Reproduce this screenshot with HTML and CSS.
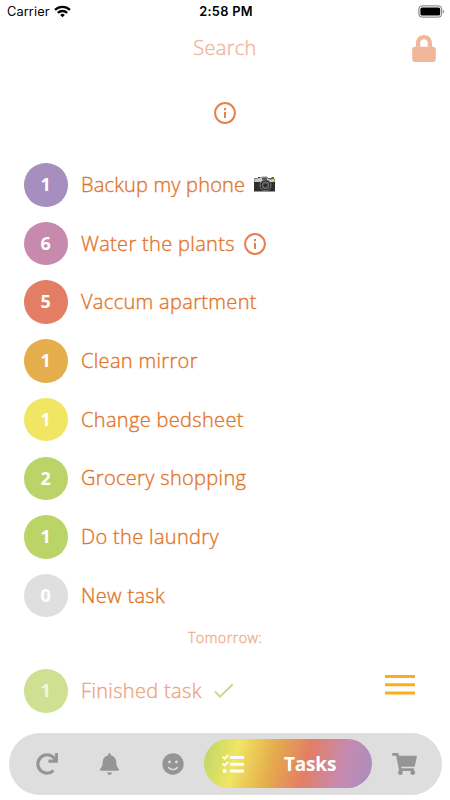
FILE: index.html
```html
<!DOCTYPE html>
<html lang="en">
<head>
    <meta charset="UTF-8">
    <meta name="viewport" content="width=device-width, initial-scale=1.0">
    <title>Tasks</title>
    <link rel="stylesheet" href="styles.css">
</head>
<body>

<div class="status-bar">
    <div class="carrier">
        <span>Carrier</span>
        <svg width="17" height="13" viewBox="0 0 17 13" fill="none" stroke="#000" stroke-width="2.3">
            <path d="M1 4.9a10.8 10.8 0 0 1 15 0"/>
            <path d="M3.8 7.9a6.8 6.8 0 0 1 9.4 0"/>
            <path d="M8.5 12.2L6.2 9.9a3.4 3.4 0 0 1 4.6 0z" fill="#000" stroke="none"/>
        </svg>
    </div>
    <div class="clock">2:58 PM</div>
    <div class="battery">
        <svg width="27" height="13" viewBox="0 0 27 13">
            <rect x=".9" y=".9" width="22.8" height="11.2" rx="3" fill="none" stroke="#777" stroke-width="1"/>
            <rect x="2.4" y="2.4" width="19.8" height="8.2" rx="1.6"/>
            <path d="M25 4.7c1.3.5 1.3 3.1 0 3.6z" fill="#777"/>
        </svg>
    </div>
</div>

<div class="header">
    <div class="search">Search</div>
    <svg class="lock" viewBox="0 0 448 512"><path d="M400 224h-24v-72C376 68.2 307.8 0 224 0S72 68.2 72 152v72H48c-26.5 0-48 21.5-48 48v192c0 26.5 21.5 48 48 48h352c26.5 0 48-21.5 48-48V272c0-26.5-21.5-48-48-48zm-104 0H152v-72c0-39.7 32.3-72 72-72s72 32.3 72 72v72z"/></svg>
</div>

<div class="hint">
    <svg class="info" viewBox="0 0 22 22">
        <circle cx="11" cy="11" r="9.9"/>
        <path d="M11 9.9v6.1M11 6v2.2"/>
    </svg>
</div>

<div class="tasks">
    <div class="task">
        <div class="count purple">1</div>
        <div class="name backup">Backup my phone</div>
        <svg class="camera" width="23" height="17" viewBox="0 0 23 17">
            <path d="M2 2.2h3V1h2.5v1L9 .8h5l1.5 1.4h3V1.2H21v1.5l1 1V15.5H1V3z" fill="#2e2e2e"/>
            <path d="M1.3 3.2L9 1.3h5l2 1.9 5.7.5V6H1.3z" fill="#c9cac6"/>
            <rect x="9.3" y="1.7" width="4.6" height="2.2" fill="#444"/>
            <rect x="18.5" y="2.7" width="2.4" height="2" fill="#f0cf4d"/>
            <circle cx="12.5" cy="9.3" r="5.5" fill="#1f1f1f" stroke="#8d8d8d" stroke-width=".9"/>
            <circle cx="12.5" cy="9.3" r="3.5" fill="#4b4f52" stroke="#999" stroke-width=".7"/>
            <circle cx="12.5" cy="9.3" r="1.6" fill="#202830"/>
        </svg>
    </div>
    <div class="task">
        <div class="count pink">6</div>
        <div class="name">Water the plants</div>
        <svg class="info" viewBox="0 0 22 22">
            <circle cx="11" cy="11" r="9.9"/>
            <path d="M11 9.9v6.1M11 6v2.2"/>
        </svg>
    </div>
    <div class="task">
        <div class="count red">5</div>
        <div class="name">Vaccum apartment</div>
    </div>
    <div class="task">
        <div class="count orange">1</div>
        <div class="name">Clean mirror</div>
    </div>
    <div class="task">
        <div class="count yellow">1</div>
        <div class="name">Change bedsheet</div>
    </div>
    <div class="task">
        <div class="count green">2</div>
        <div class="name">Grocery shopping</div>
    </div>
    <div class="task">
        <div class="count green">1</div>
        <div class="name">Do the laundry</div>
    </div>
    <div class="task">
        <div class="count gray">0</div>
        <div class="name">New task</div>
    </div>
</div>

<div class="tomorrow">Tomorrow:</div>

<div class="later">
    <div class="task finished">
        <div class="count green">1</div>
        <div class="name">Finished task</div>
        <svg class="check" width="20" height="16" viewBox="0 0 20 16"><path d="M1 8.5l5.2 5.2L18.7 1.2"/></svg>
    </div>
    <svg class="menu" width="30" height="20" viewBox="0 0 30 20"><path d="M0 1.5h30M0 9.7h30M0 17.9h30"/></svg>
</div>

<div class="tab-bar">
    <div class="tab">
        <svg width="22" height="22" viewBox="0 0 512 512"><path d="M500.33 0h-47.41a12 12 0 0 0-12 12.57l4 82.76A247.42 247.42 0 0 0 256 8C119.34 8 7.9 119.53 8 256.19 8.1 393.07 119.1 504 256 504a247.1 247.1 0 0 0 166.18-63.91 12 12 0 0 0 .48-17.43l-34-34a12 12 0 0 0-16.38-.55A176 176 0 1 1 402.1 157.8l-101.53-4.87a12 12 0 0 0-12.57 12v47.41a12 12 0 0 0 12 12h200.33a12 12 0 0 0 12-12V12a12 12 0 0 0-12-12z"/></svg>
    </div>
    <div class="tab">
        <svg width="19" height="22" viewBox="0 0 448 512"><path d="M439.39 362.29c-19.32-20.76-55.47-51.99-55.47-154.29 0-77.7-54.48-139.9-127.94-155.16V32c0-17.67-14.32-32-31.98-32s-31.98 14.33-31.98 32v20.84C118.56 68.1 64.08 130.3 64.08 208c0 102.3-36.15 133.53-55.47 154.29-6 6.45-8.66 14.16-8.61 21.71.11 16.4 12.98 32 32.1 32h383.8c19.12 0 32-15.6 32.1-32 .05-7.55-2.61-15.27-8.61-21.71zM166 456c8 34 28 56 58 56s50-22 58-56z"/></svg>
    </div>
    <div class="tab">
        <svg width="22" height="22" viewBox="0 0 496 512"><path d="M248 8C111 8 0 119 0 256s111 248 248 248 248-111 248-248S385 8 248 8zm80 168c17.7 0 32 14.3 32 32s-14.3 32-32 32-32-14.3-32-32 14.3-32 32-32zm-160 0c17.7 0 32 14.3 32 32s-14.3 32-32 32-32-14.3-32-32 14.3-32 32-32zm194.8 170.2C334.3 380.4 292.5 400 248 400s-86.3-19.6-114.8-53.8c-13.6-16.3 11-36.7 24.6-20.5 22.4 26.9 55.2 42.2 90.2 42.2s67.8-15.4 90.2-42.2c13.4-16.2 38.1 4.2 24.6 20.5z"/></svg>
    </div>
    <div class="tab active">
        <svg width="22" height="20" viewBox="0 0 22 20">
            <rect x="8" y="2" width="14" height="3" rx=".8"/>
            <rect x="8" y="8.8" width="14" height="3" rx=".8"/>
            <rect x="8" y="15.6" width="14" height="3" rx=".8"/>
            <circle cx="2.6" cy="17" r="2.1"/>
            <path d="M.7 2.8l1.9 1.9L6.2 1.1M.7 9.6l1.9 1.9 3.6-3.6" fill="none" stroke="#fff" stroke-width="1.8"/>
        </svg>
        <span>Tasks</span>
    </div>
    <div class="tab cart">
        <svg width="25" height="22" viewBox="0 0 576 512"><path d="M528.12 301.319l47.273-208C578.806 78.301 567.391 64 551.99 64H159.208l-9.166-44.81C147.758 8.021 137.93 0 126.529 0H24C10.745 0 0 10.745 0 24v16c0 13.255 10.745 24 24 24h69.883l70.248 343.435C147.325 417.1 136 435.222 136 456c0 30.928 25.072 56 56 56s56-25.072 56-56c0-15.674-6.447-29.835-16.824-40h209.647C430.447 426.165 424 440.326 424 456c0 30.928 25.072 56 56 56s56-25.072 56-56c0-22.172-12.888-41.332-31.579-50.405l5.517-24.276c3.413-15.018-8.002-29.319-23.403-29.319H218.117l-6.545-32h293.145c11.206 0 20.92-7.754 23.403-18.681z"/></svg>
    </div>
</div>

</body>
</html>
```
FILE: styles.css
```css
* {
    box-sizing: border-box;
}

body {
    margin: 0;
    width: 450px;
    height: 800px;
    overflow: hidden;
    background-color: #fff;
    font-family: "Open Sans", "Noto Sans", sans-serif;
    font-weight: 300;
    color: #e27428;
}

svg {
    display: block;
    flex-shrink: 0;
}

.status-bar {
    display: grid;
    grid-template-columns: 1fr 1fr 1fr;
    align-items: center;
    height: 23px;
    padding: 0 5px 0 7px;
    font-family: Inter, sans-serif;
    font-size: 12.8px;
    font-weight: 400;
    color: #000;
}

.carrier {
    display: flex;
    align-items: center;
    gap: 4px;
    letter-spacing: 0.1px;
}

.clock {
    text-align: center;
    font-weight: 600;
    letter-spacing: 0.3px;
}

.battery {
    display: flex;
    justify-content: flex-end;
}

.header {
    display: grid;
    grid-template-columns: 1fr auto 1fr;
    align-items: center;
    height: 50px;
    padding: 0 14px;
}

.search {
    grid-column: 2;
    font-size: 20px;
    line-height: 28px;
    letter-spacing: 0.3px;
    color: #f0b498;
}

.search, .name, .tomorrow {
    -webkit-text-stroke: 0.35px;
}

.lock {
    width: 24px;
    height: 27px;
    justify-self: end;
    fill: #f0b79b;
}

.hint {
    display: flex;
    justify-content: center;
    padding-top: 29px;
    height: 82.5px;
}

.info {
    width: 22px;
    height: 22px;
    fill: none;
    stroke: #e5814b;
    stroke-width: 2;
}

.tasks {
    display: flex;
    flex-direction: column;
}

.task {
    display: flex;
    align-items: center;
    height: 58.7px;
    padding-left: 24px;
}

.count {
    width: 43.5px;
    height: 43.5px;
    margin-right: 13.5px;
    border-radius: 50%;
    color: #fff;
    font-size: 18px;
    font-weight: 700;
    line-height: 43px;
    text-align: center;
}

.purple { background-color: #a68ebf; }
.pink { background-color: #c78aae; }
.red { background-color: #e37e64; }
.orange { background-color: #e5ae4c; }
.yellow { background-color: #f0e663; }
.green { background-color: #bbd467; }
.gray { background-color: #dfdfdf; }

.name {
    font-size: 20px;
    line-height: 28px;
    white-space: nowrap;
    letter-spacing: 0.33px;
}

.name.backup {
    letter-spacing: 0.18px;
}

.camera {
    margin-left: 8px;
}

.task .info {
    margin-left: 9px;
}

.tomorrow {
    height: 26px;
    font-size: 14.4px;
    line-height: 26px;
    text-align: center;
    letter-spacing: 0.4px;
    color: #f0ad8b;
}

.later {
    display: flex;
    align-items: center;
    justify-content: space-between;
    height: 81.8px;
    padding-right: 35px;
}

.finished {
    margin-bottom: 2px;
}

.finished .count {
    background-color: #cfe093;
    color: #f0f6df;
}

.finished .name {
    color: #eda581;
}

.check {
    margin-left: 12px;
    fill: none;
    stroke: #c8dc85;
    stroke-width: 2;
}

.menu {
    stroke: #ffab1c;
    stroke-width: 3;
    margin-bottom: 14px;
}

.tab-bar {
    display: flex;
    align-items: center;
    width: 432.5px;
    height: 62px;
    margin-left: 9px;
    padding: 0 6px;
    border-radius: 31px;
    background-color: #dedede;
}

.tab {
    display: flex;
    align-items: center;
    justify-content: center;
    width: 63px;
    height: 49px;
    fill: #959595;
}

.tab.active {
    width: 168px;
    justify-content: flex-start;
    padding-left: 18px;
    border-radius: 25px;
    background: linear-gradient(105deg, #bbd467, #f0e663 20%, #e5ae4c 40%, #e37e64 60%, #c78aae 80%, #a68ebf);
    fill: #fff;
    color: #fff;
    font-size: 19px;
    font-weight: 700;
}

.tab.active span {
    margin-left: 40px;
    letter-spacing: -0.2px;
}

.tab.cart {
    padding-left: 2px;
}
```
